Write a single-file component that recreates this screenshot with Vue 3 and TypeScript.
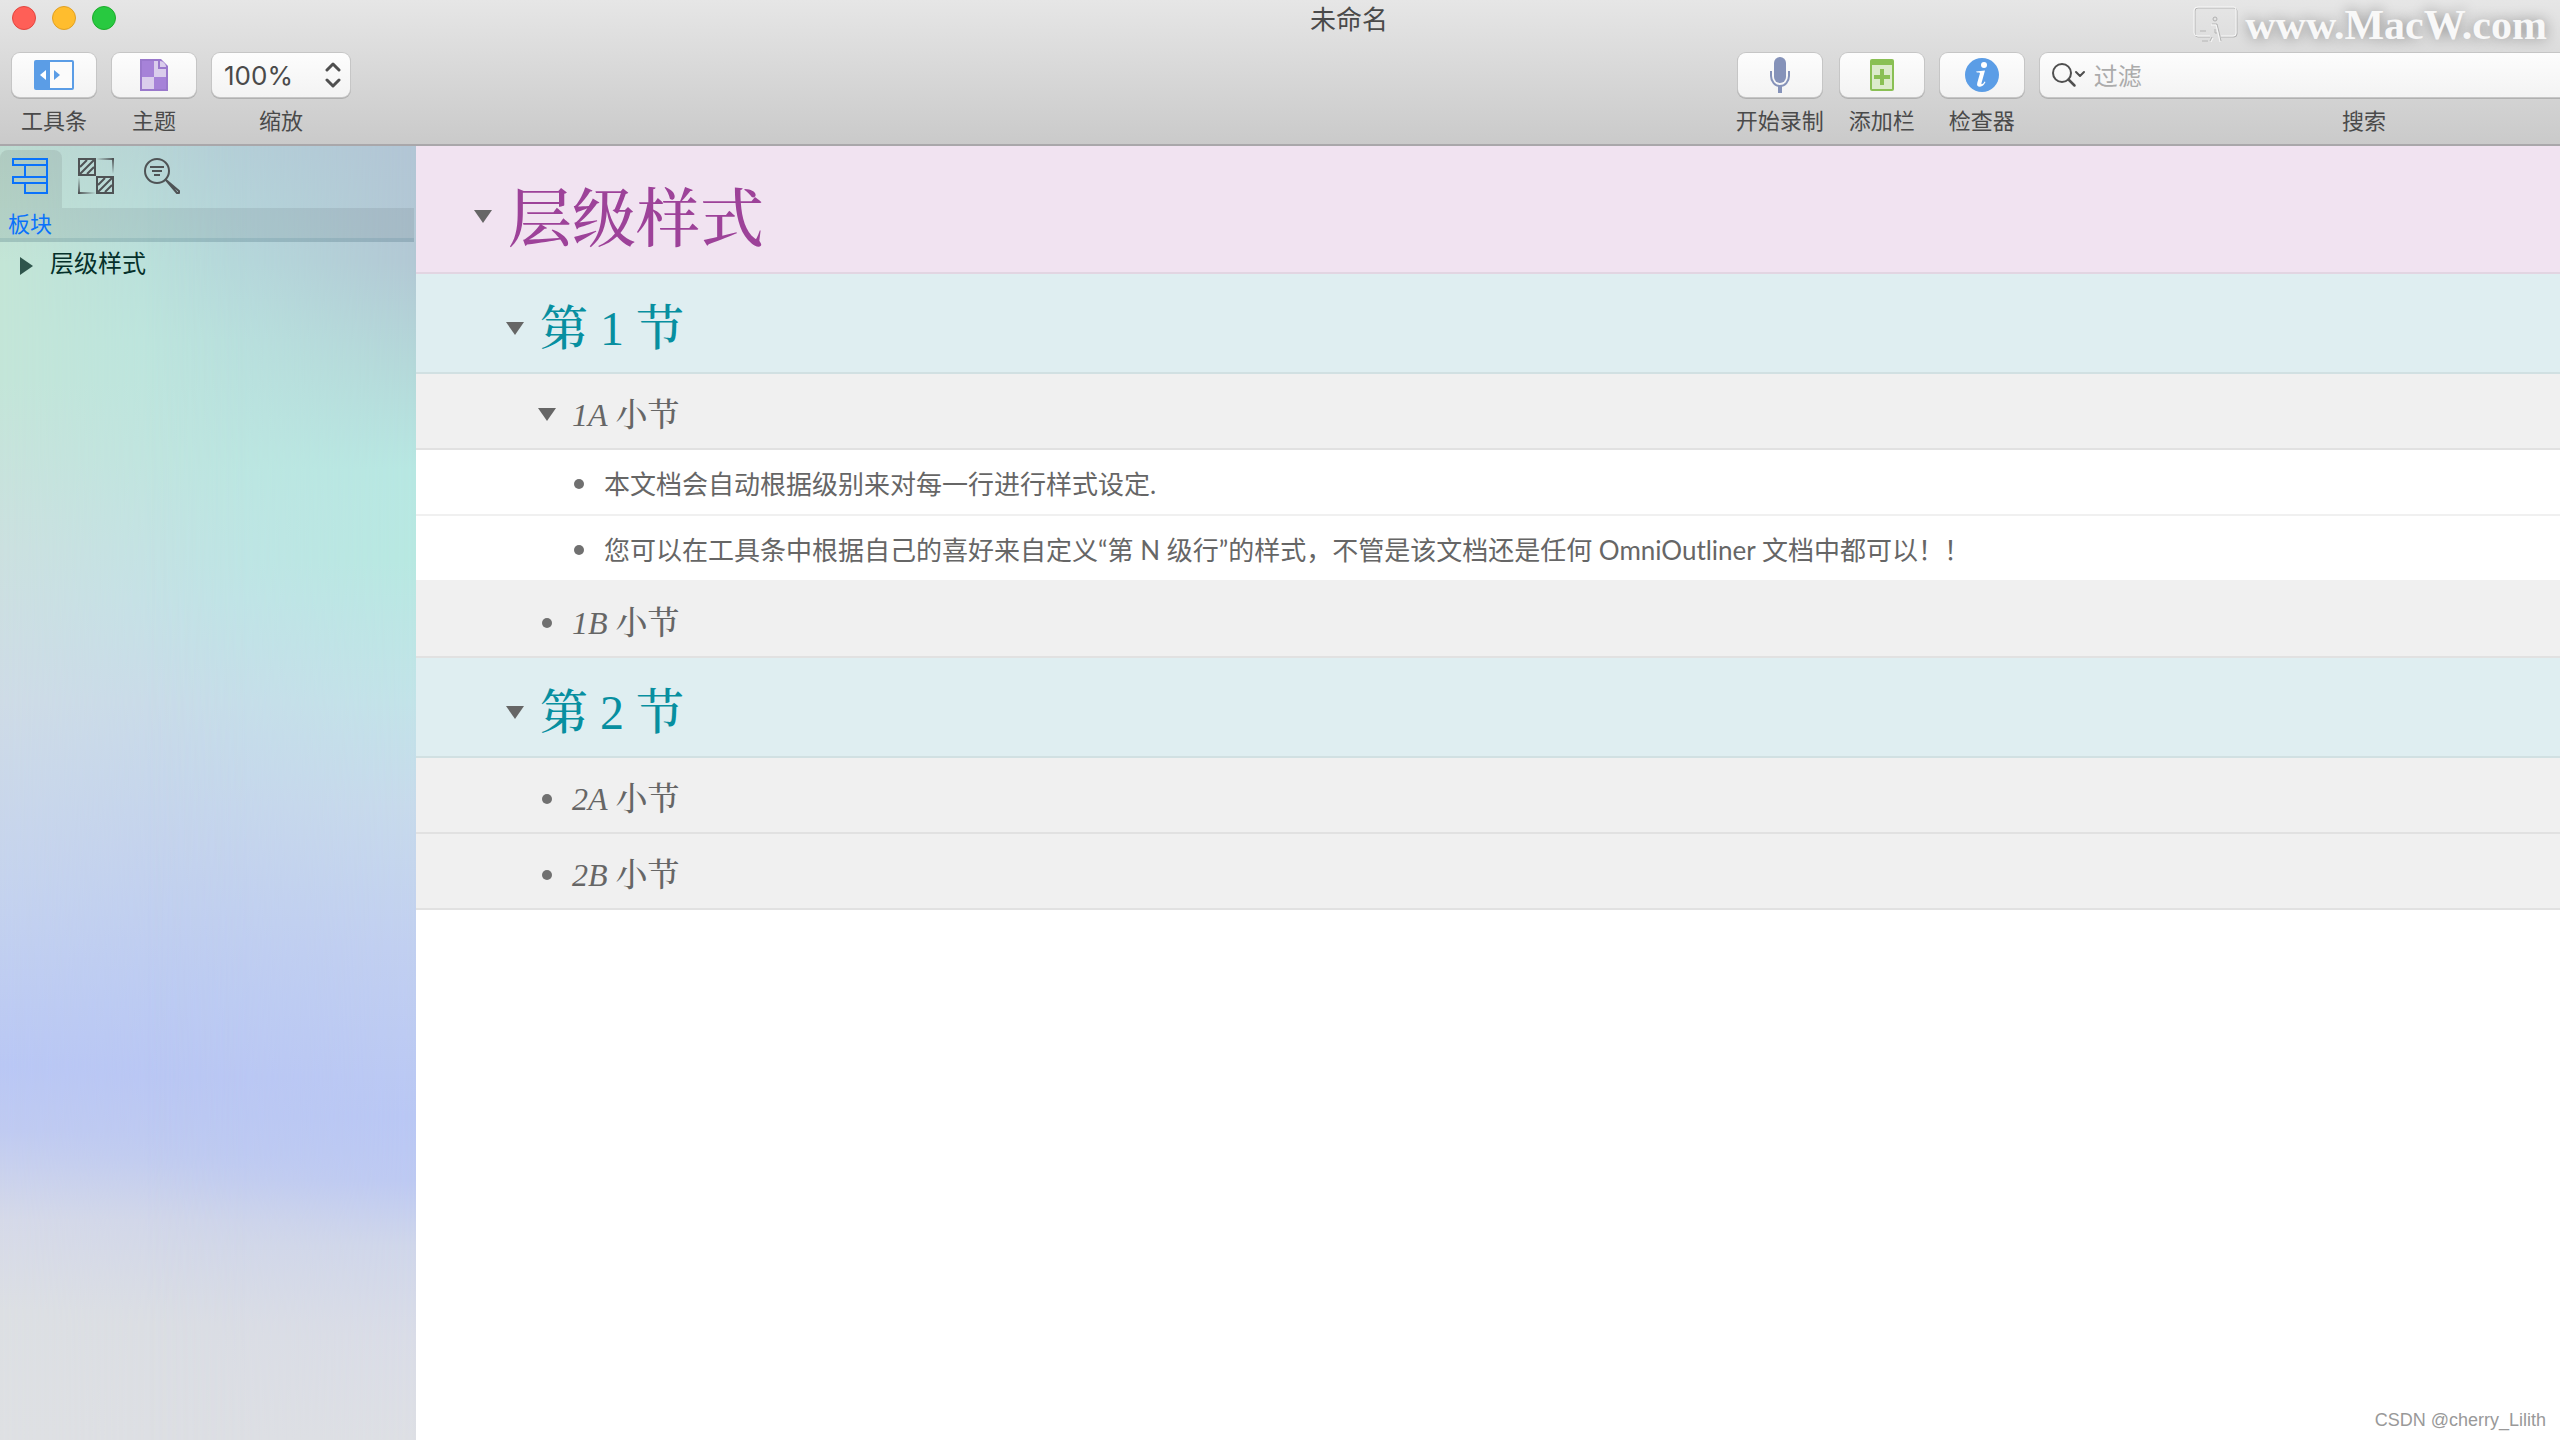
<script setup lang="ts">
import { ref } from 'vue'

interface Row {
  level: 1 | 2 | 3 | 4
  open?: boolean
  mark?: string
  text: string
}

const zoom = ref('100%')
const filter = ref('')

const rows: Row[] = [
  { level: 1, open: true, text: '层级样式' },
  { level: 2, open: true, text: '第 1 节' },
  { level: 3, open: true, mark: '1A', text: '小节' },
  { level: 4, text: '本文档会自动根据级别来对每一行进行样式设定.' },
  { level: 4, text: '您可以在工具条中根据自己的喜好来自定义“第 N 级行”的样式，不管是该文档还是任何 OmniOutliner 文档中都可以！！' },
  { level: 3, mark: '1B', text: '小节' },
  { level: 2, open: true, text: '第 2 节' },
  { level: 3, mark: '2A', text: '小节' },
  { level: 3, mark: '2B', text: '小节' },
]
</script>

<template>
  <div class="app">
    <header class="chrome">
      <div class="titlebar">
        <div class="lights">
          <button class="light red" aria-label="关闭"></button>
          <button class="light amber" aria-label="最小化"></button>
          <button class="light green" aria-label="缩放窗口"></button>
        </div>
        <h1 class="title">未命名</h1>
      </div>

      <div class="toolbar">
        <div class="item">
          <button class="btn" aria-labelledby="l-side">
            <svg width="40" height="30" viewBox="0 0 40 30">
              <rect width="40" height="30" rx="2" fill="#5b9de6" />
              <rect x="16" y="2" width="22" height="26" fill="#fbfbfb" />
              <path d="M12 10v10l-6-5z" fill="#fff" />
              <path d="M20 10v10l6-5z" fill="#5b9de6" />
            </svg>
          </button>
          <span id="l-side" class="caption">工具条</span>
        </div>
        <div class="item">
          <button class="btn" aria-labelledby="l-theme">
            <svg width="28" height="32" viewBox="0 0 28 32">
              <path d="M0 0h21l7 7v25H0z" fill="#9a78cc" />
              <path d="M2 2h12v16H2zM14 18h12v12H14z" fill="#a682d8" />
              <path d="M2 18h12v12H2zM14 2h4v8h8v8H14z" fill="#dacdec" />
              <path d="M20 2v6h6c0-3-3-6-6-6z" fill="#dacdec" />
            </svg>
          </button>
          <span id="l-theme" class="caption">主题</span>
        </div>
        <div class="item">
          <div class="zoom btn">
            <select id="zoom" v-model="zoom">
              <option>100%</option>
            </select>
            <svg class="chevrons" width="18" height="26" viewBox="0 0 18 26" fill="none" stroke="#4f4f4f" stroke-width="3" stroke-linecap="round" stroke-linejoin="round">
              <path d="M3 8l6-6 6 6M3 18l6 6 6-6" />
            </svg>
          </div>
          <label for="zoom" class="caption">缩放</label>
        </div>

        <div class="spacer"></div>

        <div class="item">
          <button class="btn" aria-labelledby="l-rec">
            <svg width="22" height="36" viewBox="0 0 22 36">
              <rect x="5" y="0" width="12" height="26" rx="6" fill="#8592b9" />
              <path d="M2 14v5a9 10 0 0 0 18 0v-5" fill="none" stroke="#8592b9" stroke-width="2" />
              <rect x="9" y="29" width="4" height="7" fill="#8592b9" />
            </svg>
          </button>
          <span id="l-rec" class="caption">开始录制</span>
        </div>
        <div class="item">
          <button class="btn" aria-labelledby="l-add">
            <svg width="24" height="32" viewBox="0 0 24 32">
              <rect width="24" height="32" rx="2" fill="#8ac054" />
              <rect x="2" y="6" width="20" height="24" fill="#dcebcb" />
              <path d="M10 10h4v6h6v4h-6v6h-4v-6H4v-4h6z" fill="#8ac054" />
            </svg>
          </button>
          <span id="l-add" class="caption">添加栏</span>
        </div>
        <div class="item">
          <button class="btn" aria-labelledby="l-info">
            <svg width="34" height="34" viewBox="0 0 34 34">
              <circle cx="17" cy="17" r="17" fill="#5b9de6" />
              <circle cx="19" cy="7" r="3" fill="#fff" />
              <path d="M11 13.500l9-1-3.500 12.500q-.4 1.600.8 1.100 1.200-.6 2.200-2.600l1 .5q-2.200 4.500-5.500 4.700-3.800.1-2.700-4l2.600-9.200q.3-1-1-1h-2z" fill="#fff" />
            </svg>
          </button>
          <span id="l-info" class="caption">检查器</span>
        </div>
        <div class="item search-item">
          <div class="search">
            <svg width="36" height="26" viewBox="0 0 36 26" fill="none" stroke="#4f4f4f" stroke-width="2" stroke-linecap="round" stroke-linejoin="round">
              <circle cx="10" cy="11" r="9" />
              <path d="M16.500 17.500l6 6" stroke-width="2.500" />
              <path d="M24 10l4 4 4-4" />
            </svg>
            <input id="filter" v-model="filter" type="text" placeholder="过滤" />
          </div>
          <label for="filter" class="caption">搜索</label>
        </div>
      </div>
    </header>

    <div class="watermark" aria-hidden="true">
      <svg width="46" height="38" viewBox="0 0 46 38" fill="none">
        <path d="M17 31H5q-3 0-3-3V5q0-3 3-3h36q3 0 3 3v23q0 3-3 3H28" stroke="#b4b4b4" stroke-width="1" />
        <path d="M17 30H5q-4 0-4-3V4q0-3 4-3h36q2 0 2 3v23q0 3-3 3H28" stroke="#f8f8f8" stroke-width="1" />
        <circle cx="22" cy="13" r="2" stroke="#b0b0b0" />
        <path d="M19 18h5l2 8 2 9M22 23v4h2M7 25h6M9 35h6M17 35l2-4" stroke="#b4b4b4" />
        <path d="M18 19h5l2 8 2 9M18 36l2-4" stroke="#f8f8f8" />
      </svg>
      <span>www.MacW.com</span>
    </div>

    <div class="body">
      <aside class="sidebar">
        <div class="tabs">
          <button class="tab active" aria-label="板块">
            <svg width="36" height="36" viewBox="0 0 36 36" fill="none" stroke="#0a72fb" stroke-width="2">
              <path d="M1 1h34v6H1zM13 7h22v12H13zM1 19h34v6H1zM13 25h22v10H13z" />
            </svg>
          </button>
          <button class="tab" aria-label="样式">
            <svg width="36" height="36" viewBox="0 0 36 36" fill="none" stroke="#4f5355" stroke-width="2">
              <defs>
                <linearGradient id="fade-h"><stop offset="0" stop-color="#4f5355" stop-opacity="0" /><stop offset="1" stop-color="#4f5355" /></linearGradient>
                <linearGradient id="fade-v" x2="0" y2="1"><stop offset="0" stop-color="#4f5355" /><stop offset="1" stop-color="#4f5355" stop-opacity="0" /></linearGradient>
                <linearGradient id="fade-h2"><stop offset="0" stop-color="#4f5355" /><stop offset="1" stop-color="#4f5355" stop-opacity="0" /></linearGradient>
                <linearGradient id="fade-v2" x2="0" y2="1"><stop offset="0" stop-color="#4f5355" stop-opacity="0" /><stop offset="1" stop-color="#4f5355" /></linearGradient>
              </defs>
              <path d="M1 1h16v16H1zM19 19h16v16H19z" />
              <path d="M2 9l7-7M2 16L16 2M9 16l7-7M20 27l7-7M20 34l14-14M27 34l7-7" />
              <g stroke="none">
                <rect x="18" y="0" width="18" height="2" fill="url(#fade-h)" />
                <rect x="34" y="0" width="2" height="16" fill="url(#fade-v)" />
                <rect x="0" y="34" width="18" height="2" fill="url(#fade-h2)" />
                <rect x="0" y="19" width="2" height="17" fill="url(#fade-v2)" />
              </g>
            </svg>
          </button>
          <button class="tab" aria-label="搜索">
            <svg width="36" height="36" viewBox="0 0 36 36" fill="none" stroke="#4f5355" stroke-width="2">
              <circle cx="13" cy="13" r="12" />
              <path d="M6 9h14M8 13h10M10 17h6" />
              <path d="M22 22L35 33v2h-2z" stroke-linejoin="round" />
            </svg>
          </button>
        </div>
        <h2 class="section">板块</h2>
        <ul class="tree">
          <li>
            <button class="disclose" aria-label="展开">
              <svg width="14" height="18" viewBox="0 0 14 18"><path d="M0 0l13 9-13 9z" fill="#2f554c" /></svg>
            </button>
            <span>层级样式</span>
          </li>
        </ul>
      </aside>

      <main class="outline">
        <div v-for="(row, i) in rows" :key="i" class="row" :class="`level-${row.level}`">
          <button v-if="row.open" class="marker" aria-label="折叠">
            <svg width="18" height="14" viewBox="0 0 18 14"><path d="M0 0h18l-9 13z" fill="#666" /></svg>
          </button>
          <span v-else class="marker"><i class="dot"></i></span>
          <p class="text"><em v-if="row.mark">{{ row.mark }}</em>{{ row.mark ? ' ' : '' }}{{ row.text }}</p>
        </div>
      </main>
    </div>

    <footer class="credit">CSDN @cherry_Lilith</footer>
  </div>
</template>

<style>
body {
  margin: 0;
  background: #fff;
}
</style>

<style scoped>
.app {
  position: relative;
  display: flex;
  flex-direction: column;
  min-height: 100vh;
  overflow: hidden;
  font-family: "Noto Sans CJK SC", sans-serif;
  color: #4a4a4a;
}
button {
  padding: 0;
  border: 0;
  background: none;
}
svg {
  display: block;
}

/* The window runs past the right edge of the screen. */
.chrome {
  box-sizing: border-box;
  width: calc(100% + 138px);
  height: 146px;
  border-bottom: 2px solid #a9a7aa;
  background: linear-gradient(#e6e6e6, #cacaca);
}
.titlebar {
  position: relative;
  display: flex;
  justify-content: center;
  height: 36px;
}
.lights {
  position: absolute;
  left: 12px;
  top: 6px;
  display: flex;
  gap: 16px;
}
.light {
  box-sizing: border-box;
  width: 24px;
  height: 24px;
  border: 1px solid;
  border-radius: 50%;
}
.red { background: #ff5f57; border-color: #e2463f; }
.amber { background: #ffbd2e; border-color: #e0a024; }
.green { background: #28c940; border-color: #1dac2b; }
.title {
  margin: 0;
  font-size: 26px;
  font-weight: 400;
  line-height: 36px;
}
.toolbar {
  display: flex;
  gap: 16px;
  padding: 17px 10px 0 12px;
}
.item {
  display: flex;
  flex-direction: column;
  align-items: center;
  gap: 6px;
}
.btn,
.search {
  display: flex;
  align-items: center;
  justify-content: center;
  width: 84px;
  height: 44px;
  border-radius: 8px;
  background: linear-gradient(#fdfdfd, #f3f3f3);
  box-shadow: 0 0 0 1px #c6c6c6, 0 1px 0 1px #b0b0b0;
}
.caption {
  font-size: 22px;
  line-height: 32px;
  white-space: nowrap;
}
.zoom {
  position: relative;
  width: 138px;
}
.zoom select {
  width: 100%;
  height: 100%;
  padding: 0 0 0 12px;
  border: 0;
  background: none;
  appearance: none;
  font: 26px Inter, sans-serif;
  color: #4a4a4a;
}
.chevrons {
  position: absolute;
  right: 8px;
  top: 9px;
  pointer-events: none;
}
.spacer {
  flex: 1;
}
.search-item {
  width: calc(24% + 6px);
}
.search {
  box-sizing: border-box;
  width: 100%;
  padding-left: 12px;
  gap: 6px;
}
.search input {
  flex: 1;
  min-width: 0;
  height: 40px;
  padding: 0 0 2px;
  border: 0;
  outline: 0;
  background: none;
  font: 24px "Noto Sans CJK SC", sans-serif;
}
.search input::placeholder {
  color: #ababab;
}
.watermark {
  position: absolute;
  top: 4px;
  right: 13px;
  display: flex;
  align-items: center;
  gap: 6px;
  font: bold 42px/42px "Liberation Serif", serif;
  color: #f8f8f8;
  text-shadow: 0 0 14px rgba(0, 0, 0, 0.4);
}

.body {
  display: flex;
  flex: 1;
}
.sidebar {
  position: relative;
  isolation: isolate;
  box-sizing: border-box;
  flex: none;
  width: 416px;
  border-right: 2px solid rgba(60, 90, 120, 0.24);
  background: linear-gradient(#b5d3d9, #b7dfde 9%, #bbe5e0 15%, #bee6e1 24%, #c3e3e8 35%, #c8dcea 43%, #c4d3ee 54%, #bccbf3 66%, #bac7f4 72%, #bfcbf1 78%, #d0d6ea 83%, #dbdee4 91%, #dddfe4);
}
.sidebar::before,
.sidebar::after {
  content: "";
  position: absolute;
  inset: 0 -2px 0 0;
  z-index: -1;
}
.sidebar::before {
  background: linear-gradient(#bddbd0, #c3e5d6 9%, #c3e5d8 18%, #cbe0df 31%, #cedbe6 43%, #c4d2ee 58%, #b9c7f4 71%, #bfcaf1 76%, #d5d9e8 83%, #dcdfe3 90%, #dee0e3);
  mask-image: linear-gradient(90deg, #000, rgba(0, 0, 0, 0.4) 30%, transparent 60%);
}
.sidebar::after {
  background: linear-gradient(#b2c5d5, #b2c8d4 9%, #b4d8d9 17%, #b7e7e2 25%, #b7e8e1 32%, #c2e3e8 43%, #c7daeb 51%, #c1cff0 62%, #b9c7f4 75%, #bdc9f2 80%, #cfd6ea 85%, #d9dce7 92%, #dddfe4);
  mask-image: linear-gradient(90deg, transparent 35%, rgba(0, 0, 0, 0.5) 70%, #000);
}
.tabs {
  display: flex;
  gap: 4px;
  padding-top: 4px;
}
.tab {
  width: 62px;
  height: 58px;
  padding: 8px 12px 14px;
}
.tab.active {
  border-radius: 8px 8px 0 0;
  background: rgba(60, 60, 60, 0.1);
}
.section {
  height: 30px;
  margin: 0;
  padding-left: 8px;
  border-bottom: 4px solid rgba(40, 80, 100, 0.22);
  background: rgba(60, 70, 80, 0.11);
  background-clip: padding-box;
  font-size: 22px;
  font-weight: 400;
  line-height: 28px;
  color: #0a72fb;
}
.tree {
  margin: 0;
  padding: 0;
  list-style: none;
}
.tree li {
  display: flex;
  align-items: center;
  gap: 16px;
  height: 40px;
  padding-left: 20px;
  font-size: 24px;
  line-height: 40px;
  color: #05302a;
}
.disclose {
  padding-top: 8px;
}

.outline {
  flex: 1;
  min-width: 0;
}
.row {
  box-sizing: border-box;
  display: flex;
  align-items: center;
  gap: 16px;
  border-bottom: 2px solid rgba(0, 0, 0, 0.06);
}
.marker {
  display: flex;
  flex: none;
  align-items: center;
  justify-content: center;
  width: 18px;
}
.dot {
  width: 10px;
  height: 10px;
  border-radius: 50%;
  background: #707070;
}
.text {
  margin: 0;
  white-space: nowrap;
}
.level-1,
.level-2,
.level-3 {
  font-family: "Liberation Serif", "Noto Serif CJK SC", "Noto Sans CJK SC", serif;
  font-weight: 500;
}
.level-1 {
  height: 128px;
  padding: 16px 0 0 58px;
  background: #f1e3f1;
  font-size: 64px;
  line-height: 92px;
  color: #9d4299;
}
.level-1 .text {
  padding-top: 6px;
}
.level-2 {
  height: 100px;
  padding: 12px 0 0 90px;
  background: #dfeef1;
  font-size: 48px;
  line-height: 72px;
  color: #078fa0;
}
.level-3 {
  height: 76px;
  padding: 8px 0 0 122px;
  background: #f0f0f0;
  font-size: 32px;
  line-height: 48px;
  color: #666;
}
.level-4 {
  height: 66px;
  padding: 4px 0 0 154px;
  background: #fff;
  font: 26px/40px Lato, "Noto Sans CJK SC", sans-serif;
  color: #666;
}

.credit {
  position: absolute;
  right: 14px;
  bottom: 8px;
  font: 18px/24px "Liberation Sans", sans-serif;
  color: #999;
}
</style>
